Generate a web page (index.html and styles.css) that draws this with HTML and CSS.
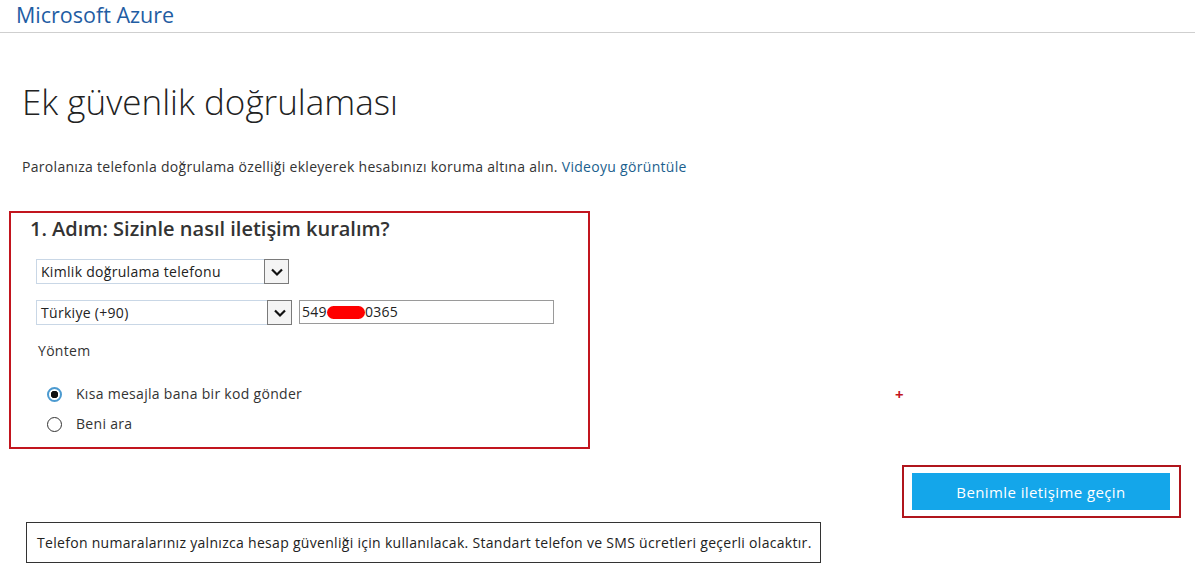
FILE: index.html
```html
<!DOCTYPE html>
<html lang="tr">
<head>
    <meta charset="UTF-8">
    <title>Ek güvenlik doğrulaması</title>
    <link rel="stylesheet" href="styles.css">
</head>
<body>

<header class="topbar">
    <span class="brand">Microsoft Azure</span>
</header>

<div class="page">
    <h1>Ek güvenlik doğrulaması</h1>
    <p class="intro">Parolanıza telefonla doğrulama özelliği ekleyerek hesabınızı koruma altına alın. <a href="#">Videoyu görüntüle</a></p>

    <div class="step-row">
        <!-- Adım 1 -->
        <div class="step-box">
            <h2>1. Adım: Sizinle nasıl iletişim kuralım?</h2>

            <div class="field-row">
                <div class="combo combo-type">
                    <span class="combo-text">Kimlik doğrulama telefonu</span>
                    <span class="combo-arrow"><svg width="14" height="10" viewBox="0 0 14 10"><path d="M2 2.5 L7 7.5 L12 2.5" fill="none" stroke="#111" stroke-width="2.2"/></svg></span>
                </div>
            </div>

            <div class="field-row">
                <div class="combo combo-country">
                    <span class="combo-text">Türkiye (+90)</span>
                    <span class="combo-arrow"><svg width="14" height="10" viewBox="0 0 14 10"><path d="M2 2.5 L7 7.5 L12 2.5" fill="none" stroke="#111" stroke-width="2.2"/></svg></span>
                </div>
                <div class="phone-field">549<span class="redact"></span>0365</div>
            </div>

            <div class="method-label">Yöntem</div>

            <label class="radio"><span class="radio-dot checked"></span>Kısa mesajla bana bir kod gönder</label>
            <label class="radio"><span class="radio-dot"></span>Beni ara</label>
        </div>

        <span class="plus">+</span>
    </div>

    <div class="action-row">
        <div class="action-box">
            <button type="button">Benimle iletişime geçin</button>
        </div>
    </div>

    <div class="note">Telefon numaralarınız yalnızca hesap güvenliği için kullanılacak. Standart telefon ve SMS ücretleri geçerli olacaktır.</div>
</div>

</body>
</html>
```

FILE: styles.css
```css
/* Genel */
body {
    margin: 0;
    padding: 0;
    background: #fff;
    color: #333;
    font-family: "Segoe UI", "Open Sans", sans-serif;
    font-size: 14px;
    letter-spacing: 0.3px;
}

.topbar {
    height: 33px;
    border-bottom: 1px solid #cfcfcf;
    padding-left: 16px;
    box-sizing: border-box;
}

.brand {
    display: block;
    color: #1f5da3;
    font-size: 21.5px;
    letter-spacing: 0;
    line-height: 33px;
    position: relative;
    top: -2px;
}

.page {
    padding: 0 14px 0 9px;
}

h1 {
    margin: 45px 0 0 13px;
    font-size: 35px;
    font-weight: 300;
    letter-spacing: 0;
    color: #222;
    line-height: 48px;
}

.intro {
    margin: 31px 0 0 13px;
    line-height: 20px;
}

.intro a {
    color: #1b5f8e;
    text-decoration: none;
}

/* Adım kutusu */
.step-row {
    display: flex;
    align-items: flex-start;
    margin-top: 34px;
}

.step-box {
    width: 581px;
    height: 238px;
    box-sizing: border-box;
    border: 2px solid #c2151e;
    padding: 2px 0 0 19px;
}

.step-box h2 {
    margin: 0 0 16px 0;
    font-size: 20px;
    font-weight: 600;
    letter-spacing: 0;
    color: #333;
    line-height: 28px;
}

.field-row {
    display: flex;
    gap: 7px;
    margin: 0 0 16px 6px;
}

.combo {
    display: flex;
    height: 25px;
}

.combo-text {
    border: 1px solid #c9d7e6;
    border-right: none;
    box-sizing: border-box;
    padding: 0 4px;
    line-height: 23px;
    color: #222;
}

.combo-type .combo-text { width: 228px; }
.combo-country .combo-text { width: 231px; }

.combo-arrow {
    width: 25px;
    height: 25px;
    box-sizing: border-box;
    border: 1px solid #7a7a7a;
    background: #f4f4f4;
    display: flex;
    align-items: center;
    justify-content: center;
}

.phone-field {
    width: 255px;
    height: 24px;
    box-sizing: border-box;
    border: 1px solid #9a9a9a;
    padding: 0 2px;
    line-height: 22px;
    color: #222;
}

.redact {
    display: inline-block;
    width: 38px;
    height: 13px;
    background: #f00;
    border-radius: 7px;
    vertical-align: -2px;
}

.method-label {
    margin: 15px 0 0 8px;
    line-height: 20px;
}

.radio {
    display: flex;
    align-items: center;
    margin-left: 17px;
    line-height: 20px;
    height: 20px;
}

.radio:first-of-type {
    margin-top: 23px;
}

.radio + .radio {
    margin-top: 10px;
}

.radio-dot {
    width: 15px;
    height: 15px;
    box-sizing: border-box;
    border: 1px solid #333;
    border-radius: 50%;
    margin-right: 14px;
    background: #fff;
}

.radio-dot.checked {
    border: 2px solid #4b9ad0;
    background: radial-gradient(circle, #111 0 3.5px, #fff 4px);
}

.plus {
    color: #c2151e;
    font-weight: bold;
    font-size: 15px;
    margin: 173px 0 0 305px;
}

/* Botão */
.action-row {
    display: flex;
    justify-content: flex-end;
    margin-top: 16px;
}

.action-box {
    width: 279px;
    height: 53px;
    box-sizing: border-box;
    border: 2px solid #b0151c;
    padding: 6px 9px 0 8px;
}

.action-box button {
    width: 100%;
    height: 37px;
    border: none;
    background: #14a6ea;
    color: #fff;
    font-family: inherit;
    font-size: 15px;
    letter-spacing: 0.4px;
    cursor: pointer;
}

/* Nota */
.note {
    width: 795px;
    height: 41px;
    box-sizing: border-box;
    border: 1px solid #333;
    margin: 4px 0 0 17px;
    padding-left: 10px;
    line-height: 39px;
    color: #222;
}
```
